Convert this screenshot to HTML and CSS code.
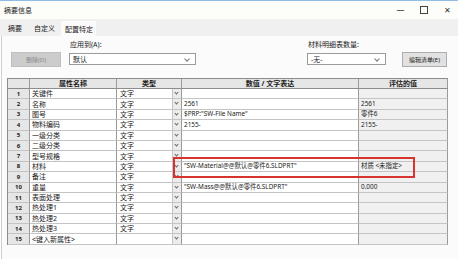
FILE: index.html
```html
<!DOCTYPE html>
<html lang="zh-CN">
<head>
    <meta charset="UTF-8">
    <title>摘要信息</title>
    <link rel="stylesheet" href="styles.css">
</head>
<body>
    <div class="window">
        <div class="titlebar">
            <span class="title">摘要信息</span>
            <div class="win-controls">
                <span class="wc">&#8212;</span>
                <span class="wc box"></span>
                <span class="wc">&#10005;</span>
            </div>
        </div>

        <div class="tabs">
            <span class="tab">摘要</span>
            <span class="tab">自定义</span>
            <span class="tab active">配置特定</span>
        </div>

        <div class="panel">
            <div class="toolbar">
                <button class="btn del" disabled>删除(D)</button>
                <div class="field apply">
                    <label>应用到(A):</label>
                    <div class="combo">默认<span class="caret"></span></div>
                </div>
                <div class="field bom">
                    <label>材料明细表数量:</label>
                    <div class="combo">-无-<span class="caret"></span></div>
                </div>
                <button class="btn edit">编辑清单(E)</button>
            </div>

            <div class="grid-wrap">
                <div class="grid" id="grid">
                    <div class="hd"></div>
                    <div class="hd">属性名称</div>
                    <div class="hd">类型</div>
                    <div class="hd">数值 / 文字表达</div>
                    <div class="hd">评估的值</div>
                </div>
                <div class="highlight"></div>
            </div>
        </div>
    </div>

    <script>
        const rows = [
            ['关键件', '文字', '', ''],
            ['名称', '文字', '2561', '2561'],
            ['图号', '文字', '$PRP:"SW-File Name"', '零件6'],
            ['物料编码', '文字', '2155-', '2155-'],
            ['一级分类', '文字', '', ''],
            ['二级分类', '文字', '', ''],
            ['型号规格', '文字', '', ''],
            ['材料', '文字', '"SW-Material@@默认@零件6.SLDPRT"', '材质 <未指定>'],
            ['备注', '文字', '', ''],
            ['重量', '文字', '"SW-Mass@@默认@零件6.SLDPRT"', '0.000'],
            ['表面处理', '文字', '', ''],
            ['热处理1', '文字', '', ''],
            ['热处理2', '文字', '', ''],
            ['热处理3', '文字', '', ''],
            ['<键入新属性>', '', '', '']
        ];

        const grid = document.getElementById('grid');
        rows.forEach((r, i) => {
            const cells = [
                ['num', String(i + 1)],
                ['name', r[0]],
                ['type', r[1]],
                ['value', r[2]],
                ['eval', r[3]]
            ];
            cells.forEach(([cls, text]) => {
                const cell = document.createElement('div');
                cell.className = 'cell ' + cls;
                const label = document.createElement('span');
                label.textContent = text;
                cell.appendChild(label);
                if (cls === 'type') {
                    const arrow = document.createElement('span');
                    arrow.className = 'drop';
                    cell.appendChild(arrow);
                }
                grid.appendChild(cell);
            });
        });
    </script>
</body>
</html>
```

FILE: styles.css
```css
body {
    margin: 0;
    font-family: "Noto Sans", "Noto Sans CJK SC", sans-serif;
    font-size: 7px;
    color: #1a1a1a;
    background: #ffffff;
}
.window {
    width: 458px;
    height: 259px;
    overflow: hidden;
    display: flex;
    flex-direction: column;
    background: #ffffff;
    border-top: 1px solid #8fbde6;
    box-sizing: border-box;
}
.titlebar {
    height: 18px;
    display: flex;
    align-items: center;
    justify-content: space-between;
    padding: 0 6px 0 4px;
    background: #fdfdfa;
}
.title {
    font-size: 7px;
}
.win-controls {
    display: flex;
    align-items: center;
    gap: 14px;
    color: #333;
}
.wc {
    font-size: 8px;
    line-height: 8px;
    width: 9px;
    text-align: center;
}
.wc.box {
    width: 6px;
    height: 6px;
    border: 1px solid #444;
    margin: 0 1px;
}
.tabs {
    height: 17px;
    display: flex;
    align-items: stretch;
    padding-left: 2px;
    background: #f0f0f0;
}
.tab {
    display: flex;
    align-items: center;
    padding: 0 6px;
}
.tab.active {
    background: #fbfbfb;
    margin-top: 2px;
    padding: 0 3px 0 4px;
}
.panel {
    flex: 1;
    background: #fbfbfb;
    border-left: 1px solid #cfcfcf;
    margin-left: 1px;
}
.toolbar {
    height: 31px;
    display: flex;
    align-items: flex-end;
    padding-left: 9px;
}
.btn {
    font-family: inherit;
    font-size: 6px;
    height: 15px;
    padding: 0;
    border: 1px solid #adadad;
    background: #e1e1e1;
    color: #1a1a1a;
}
.btn.del {
    width: 50px;
    background: #cccccc;
    border-color: #bfbfbf;
    color: #8a8a8a;
}
.btn.edit {
    width: 45px;
    margin-left: 16px;
}
.field {
    display: flex;
    flex-direction: column;
    margin-bottom: 2px;
}
.field label {
    font-size: 7px;
    margin-bottom: 4px;
    margin-left: 1px;
}
.apply {
    width: 127px;
    margin-left: 8px;
}
.bom {
    width: 79px;
    margin-left: 111px;
}
.combo {
    position: relative;
    height: 12px;
    line-height: 11px;
    padding-left: 3px;
    border: 1px solid #9a9a9a;
    background: #ffffff;
    box-sizing: border-box;
    font-size: 7px;
}
.caret {
    position: absolute;
    right: 6px;
    top: 3px;
    width: 3px;
    height: 3px;
    border-right: 1px solid #777;
    border-bottom: 1px solid #777;
    transform: rotate(45deg);
}
.grid-wrap {
    position: relative;
    margin: 11px 0 0 5px;
    width: 441px;
}
.grid {
    display: grid;
    grid-template-columns: 22px 87px 65px 177px 89px;
    grid-template-rows: 10px;
    grid-auto-rows: 10.4px;
    border-top: 1px solid #8c8c8c;
    border-left: 1px solid #8c8c8c;
    background: #ffffff;
}
.hd, .cell {
    border-right: 1px solid #9a9a9a;
    border-bottom: 1px solid #c4c4c4;
    box-sizing: border-box;
    white-space: nowrap;
    overflow: hidden;
    display: flex;
    align-items: center;
    line-height: 1;
}
.hd {
    background: #e6e6e6;
    font-weight: bold;
    justify-content: center;
    border-bottom-color: #8c8c8c;
    font-size: 7px;
}
.cell {
    padding-left: 2px;
    position: relative;
}
.num {
    background: #e6e6e6;
    font-weight: bold;
    justify-content: center;
    padding-left: 0;
    font-size: 6px;
}
.value, .eval {
    font-size: 6.4px;
}
.eval {
    background: #f0f0f0;
}
.type {
    padding-left: 3px;
}
.drop {
    position: absolute;
    right: 0;
    top: 0;
    bottom: 0;
    width: 8px;
    background: #ececec;
    border-left: 1px solid #c4c4c4;
}
.drop::after {
    content: "";
    position: absolute;
    left: 2px;
    top: 2px;
    width: 2px;
    height: 2px;
    border-right: 1px solid #666;
    border-bottom: 1px solid #666;
    transform: rotate(45deg);
}
.highlight {
    position: absolute;
    left: 166px;
    top: 79px;
    width: 242px;
    height: 21px;
    border: 2px solid #d8342e;
    box-sizing: border-box;
}
```
